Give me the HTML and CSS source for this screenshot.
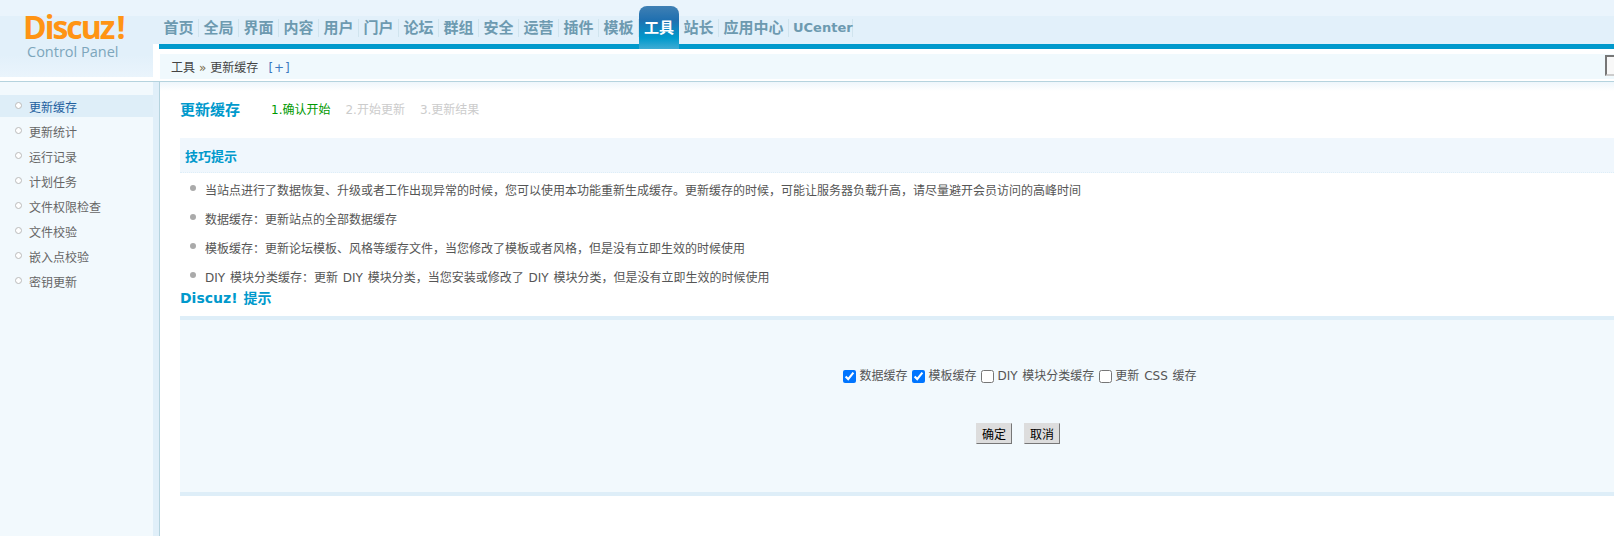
FILE: index.html
```html
<!DOCTYPE html>
<html lang="zh-CN">
<head>
    <meta charset="UTF-8">
    <title>Discuz! Control Panel</title>
    <link rel="stylesheet" href="styles.css">
</head>
<body>
    <div class="header">
        <div class="logo">
            <div class="logo-name">Discuz<span class="logo-bang">!</span></div>
            <div class="logo-sub">Control Panel</div>
        </div>
        <div class="header-right">
            <ul class="nav">
                <li><a>首页</a></li>
                <li><a>全局</a></li>
                <li><a>界面</a></li>
                <li><a>内容</a></li>
                <li><a>用户</a></li>
                <li><a>门户</a></li>
                <li><a>论坛</a></li>
                <li><a>群组</a></li>
                <li><a>安全</a></li>
                <li><a>运营</a></li>
                <li><a>插件</a></li>
                <li><a>模板</a></li>
                <li class="active"><a>工具</a></li>
                <li><a>站长</a></li>
                <li class="wide"><a>应用中心</a></li>
                <li class="latin"><a>UCenter</a></li>
            </ul>
            <div class="crumb">
                <span>工具</span>
                <span class="crumb-sep">»</span>
                <span>更新缓存</span>
                <span class="crumb-add">[+]</span>
                <input class="crumb-input" type="text">
            </div>
        </div>
    </div>

    <div class="main">
        <ul class="side">
            <li class="active">更新缓存</li>
            <li>更新统计</li>
            <li>运行记录</li>
            <li>计划任务</li>
            <li>文件权限检查</li>
            <li>文件校验</li>
            <li>嵌入点校验</li>
            <li>密钥更新</li>
        </ul>
        <div class="content">
            <div class="title-row">
                <h3>更新缓存</h3>
                <span class="step current">1.确认开始</span>
                <span class="step">2.开始更新</span>
                <span class="step">3.更新结果</span>
            </div>
            <div class="tips-head">技巧提示</div>
            <ul class="tips">
                <li>当站点进行了数据恢复、升级或者工作出现异常的时候，您可以使用本功能重新生成缓存。更新缓存的时候，可能让服务器负载升高，请尽量避开会员访问的高峰时间</li>
                <li>数据缓存：更新站点的全部数据缓存</li>
                <li>模板缓存：更新论坛模板、风格等缓存文件，当您修改了模板或者风格，但是没有立即生效的时候使用</li>
                <li>DIY 模块分类缓存：更新 DIY 模块分类，当您安装或修改了 DIY 模块分类，但是没有立即生效的时候使用</li>
            </ul>
            <h3 class="notice-title">Discuz! 提示</h3>
            <div class="notice">
                <div class="checks">
                    <label><input type="checkbox" checked>数据缓存</label>
                    <label><input type="checkbox" checked>模板缓存</label>
                    <label><input type="checkbox">DIY 模块分类缓存</label>
                    <label><input type="checkbox">更新 CSS 缓存</label>
                </div>
                <div class="buttons">
                    <button class="btn">确定</button>
                    <button class="btn">取消</button>
                </div>
            </div>
        </div>
    </div>
</body>
</html>
```

FILE: styles.css
```css
html, body {
    margin: 0;
    padding: 0;
    height: 100%;
    overflow: hidden;
}
body {
    background: #fff;
    color: #666;
    font: 12px/1.5 "DejaVu Sans", "Noto Sans CJK SC", sans-serif;
    word-spacing: 1px;
}
ul {
    list-style: none;
    margin: 0;
    padding: 0;
}
h3 {
    margin: 0;
    color: #09c;
    font-size: 14px;
    font-weight: bold;
}

/* header */
.header {
    display: flex;
    height: 81px;
    border-bottom: 1px solid #b5d3de;
    background: #fff;
}
.logo {
    width: 153px;
    height: 77px;
    flex: none;
    box-sizing: border-box;
    padding: 10px 0 0 23px;
    background: linear-gradient(#eaf4fc 0, #eaf4fc 16px, #e2f0fa 16px, #e2f0fa 55px, #eaf4fc 77px);
}
.logo-name {
    color: #ff9414;
    font: bold 32px/34px "Open Sans", sans-serif;
    letter-spacing: -2px;
}
.logo-bang {
    margin-left: 3px;
}
.logo-sub {
    margin-left: 4px;
    color: #7da6bc;
    font: 14.5px/16px "Open Sans", sans-serif;
    word-spacing: 0;
}
.header-right {
    flex: 1;
    min-width: 0;
    display: flex;
    flex-direction: column;
}
.nav {
    display: flex;
    height: 49px;
    flex: none;
    box-sizing: border-box;
    padding: 6px 0 0 6px;
    background:
        linear-gradient(#09c, #09c) 6px 44px / 100% 5px no-repeat,
        linear-gradient(#eaf4fc 0, #eaf4fc 16px, #e2f0fa 16px, #e2f0fa 44px, #fff 44px);
}
.nav li {
    width: 40px;
    height: 43px;
    flex: none;
    box-sizing: border-box;
    padding-top: 13px;
    text-align: center;
}
.nav a {
    display: block;
    height: 18px;
    border-right: 1px solid #d0e4ee;
    color: #6d9ab0;
    font-size: 15px;
    font-weight: bold;
    line-height: 19px;
}
.nav .active {
    border-radius: 8px 8px 0 0;
    background: linear-gradient(#4080b4 0, #2070b0 14px, #0099cc 32px, #40acd4 100%);
}
.nav .active a {
    border-right: 0;
    color: #fff;
}
.nav .wide {
    width: 70px;
}
.nav .latin {
    width: 64px;
}
.nav .latin a {
    font-size: 13px;
    line-height: 18px;
    padding-left: 4px;
    box-sizing: border-box;
}
.crumb {
    display: flex;
    align-items: center;
    gap: 4px;
    height: 25px;
    box-sizing: border-box;
    margin: 5px 0 2px 7px;
    padding: 2px 0 0 11px;
    background: #f0f9fd;
    color: #444;
    word-spacing: 0;
}
.crumb-sep {
    color: #7a6a4a;
}
.crumb-add {
    margin-left: 6px;
    color: #3a78c0;
    letter-spacing: 1px;
}
.crumb-input {
    flex: none;
    width: 9px;
    height: 21px;
    box-sizing: border-box;
    margin: -5px 0 0 auto;
    padding: 0;
    border: 2px solid #767676;
    border-right: 0;
    border-bottom-color: #ccc;
    background: #f8f8f8;
}

/* body */
.main {
    display: flex;
    height: 454px;
}
.side {
    width: 153px;
    flex: none;
    padding-top: 13px;
    background: #f2f9fd;
    border-right: 6px solid #e0eff9;
}
.side li {
    position: relative;
    height: 22px;
    margin-bottom: 3px;
    padding-left: 29px;
    line-height: 27px;
}
.side li::before {
    content: "";
    position: absolute;
    left: 15px;
    top: 7px;
    width: 5px;
    height: 5px;
    border: 1px solid #bbb;
    border-radius: 50%;
    background: #fff;
}
.side .active {
    background: #deeef8;
    color: #22609f;
}
.content {
    flex: 1;
    min-width: 0;
    border-left: 1px solid #b5d3de;
    padding-left: 20px;
    background: linear-gradient(#eef6fb 0, #fff 9px);
    overflow: hidden;
}
.title-row {
    display: flex;
    align-items: center;
    height: 56px;
    padding-bottom: 1px;
    box-sizing: border-box;
}
.title-row h3 {
    width: 91px;
    font-size: 15px;
    line-height: 60px;
}
.step {
    margin-right: 15px;
    color: #ccc;
}
.step.current {
    color: #090;
}
.tips-head {
    height: 35px;
    box-sizing: border-box;
    padding-left: 5px;
    border-bottom: 1px dotted #deeef8;
    background: #f0f7fd;
    color: #09c;
    font-size: 13px;
    font-weight: bold;
    line-height: 38px;
}
.tips {
    padding-top: 2px;
}
.tips li {
    position: relative;
    height: 29px;
    padding-left: 25px;
    color: #555;
    line-height: 33px;
    white-space: nowrap;
}
.tips li::before {
    content: "";
    position: absolute;
    left: 10px;
    top: 10px;
    width: 6px;
    height: 6px;
    border-radius: 50%;
    background: #aaa;
}
.notice-title {
    margin-top: -3px;
    line-height: 20px;
}
.notice {
    width: 1680px;
    height: 180px;
    box-sizing: border-box;
    margin-top: 8px;
    border-top: 4px solid #deeef8;
    border-bottom: 4px solid #deeef8;
    background: #f2f9fd;
}
.checks {
    display: flex;
    justify-content: center;
    gap: 5px;
    padding-top: 47px;
}
.checks label {
    display: flex;
    align-items: center;
    color: #555;
}
.checks input {
    margin: 0 3px 0 0;
}
.buttons {
    display: flex;
    justify-content: center;
    gap: 12px;
    margin-top: 38px;
    padding-right: 4px;
}
.btn {
    width: 36px;
    height: 21px;
    padding: 0;
    border: 1px solid #ddd;
    border-right-color: #777;
    border-bottom-color: #777;
    background: #ddd;
    color: #000;
    font: 12px "Noto Sans CJK SC", sans-serif;
}
```
